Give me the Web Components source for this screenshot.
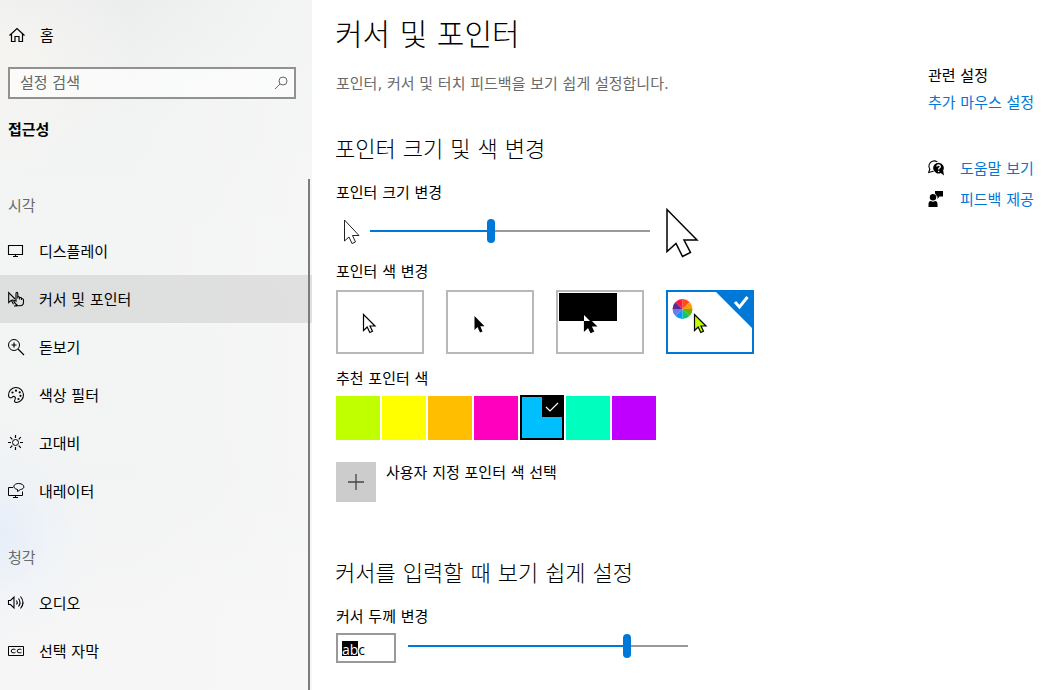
<!DOCTYPE html>
<html lang="ko">
<head>
<meta charset="utf-8">
<meta name="viewport" content="width=device-width, initial-scale=1">
<title>설정</title>
<style>
  body {
    margin: 0;
    background: #fff;
    color: #000;
    font: 15px/22px "DejaVu Sans", "Noto Sans CJK KR", sans-serif;
  }
</style>
</head>
<body>
<settings-app></settings-app>

<script>
const define = (name, html, setup) => {
  const template = document.createElement('template');
  template.innerHTML = html;
  customElements.define(name, class extends HTMLElement {
    constructor() {
      super();
      this.attachShadow({ mode: 'open' }).append(template.content.cloneNode(true));
    }
    connectedCallback() {
      if (setup && !this.ready) { this.ready = true; setup(this, this.shadowRoot); }
    }
  });
};

const line = body => `<g fill="none" stroke="currentColor">${body}</g>`;
const ICONS = {
  home: line('<path d="M.5 8.500L8 1.500L15.500 8.500M2.500 7V14.500H6V9.500H10V14.500H13.500V7" stroke-width="1.200"/>'),
  search: line('<circle cx="11" cy="6" r="4"/><path d="M8 9L3 14"/>'),
  display: line('<path d="M.5 2.500H14.500V11.500H.5ZM7.500 11.500V14M5 13.500H10" stroke-width="1.100"/>'),
  pointer: line('<path d="M7 8L.7 1.700V11.500L3.300 9.300L5.500 13.300M4 9L7 9.500M6 15Q9 15 9.500 14.500M9.500 14.500Q7 12.500 5.800 10.200Q6.800 8.800 8 10L8 2.500Q8 1.200 8.900 1.200Q9.800 1.200 9.800 2.500V7.500M9.800 6Q11.300 5.300 11.600 6.500V8.500M11.600 6.800Q13.300 6 13.600 7.300V9M13.600 7.800Q15.500 7.300 15.500 9.300V11Q15.500 14.800 12 14.800H10Q8 14 6 11" stroke-width="1.100"/>'),
  magnifier: line('<circle cx="6" cy="6" r="5.500"/><path d="M10 10L16 16M3.500 6H8.500M6 3.500V8.500" stroke-width="1.200"/>'),
  palette: line('<path d="M.5 8.500A7.500 7.500 0 1 1 8.500 15.500C6.500 15.500 6 14 7 12.500C8.500 10 5.500 8.500 4.500 10C3.500 11.500 .5 11 .5 8.500Z" stroke-width="1.100"/>') + '<g fill="currentColor"><circle cx="4.500" cy="5.500" r="1.100"/><circle cx="8" cy="3.700" r="1.100"/><circle cx="11.700" cy="5.300" r="1.100"/><circle cx="12.500" cy="8.800" r="1.100"/><circle cx="10.500" cy="12" r="1.100"/></g>',
  sun: line('<circle cx="7.500" cy="7.500" r="3"/><path d="M7.500 0V3M7.500 12V15M0 7.500H3M12 7.500H15M2.200 2.200L4.300 4.300M10.700 10.700L12.800 12.800M2.200 12.800L4.300 10.700M10.700 4.300L12.800 2.200" stroke-width="1.200"/>'),
  narrator: line('<path d="M5 4.500H.5V12.500H14.500V8.500M7.500 12.500V15M5 14.500H10"/><path d="M9.500 8.500V6.500C3.500 5 5.500 .5 10.500 .5C17 .5 17.500 6 12.500 6.500Z"/>'),
  audio: line('<path d="M.5 5.500H2.500L6 2V13L2.500 9.500H.5ZM8.500 5.500Q10 7.500 8.500 9.500M10.500 3.500Q13.500 7.500 10.500 11.500M12.500 1.500Q17.500 7.500 12.500 13.500" stroke-width="1.100"/>'),
  captions: line('<path d="M.5 3.500H15.500V12.500H.5Z"/><path d="M7.500 6.700Q6.500 6 5 6.200Q3.200 6.500 3.200 8Q3.200 9.600 5 9.800Q6.500 10 7.500 9.300M13.500 6.700Q12.500 6 11 6.200Q9.200 6.500 9.200 8Q9.200 9.600 11 9.800Q12.500 10 13.500 9.300"/>'),
  help: '<path d="M.7 12.500L1.800 9A5.200 5.200 0 1 1 5 11.200Z" fill="#fff" stroke="currentColor" stroke-width="1.100"/><circle cx="10.500" cy="8" r="6.200" fill="#fff"/><path fill="currentColor" d="M10.500 2.700A5.400 5.400 0 1 0 12.800 13L16 15.500L15.200 10.800A5.400 5.400 0 0 0 10.500 2.700Z"/><path d="M8.800 6.500Q9 5 10.500 5Q12.300 5 12.300 6.500Q12.300 7.400 11.300 8Q10.600 8.500 10.600 9.500M10.600 10.800V12" fill="none" stroke="#fff" stroke-width="1.300"/>',
  feedback: '<path fill="currentColor" d="M7 0H15V5.500H11.500L9.500 8V5.500H8.600Q8.600 3.500 7 2.500Z"/><circle cx="5" cy="6.200" r="3.200" fill="currentColor"/><path fill="currentColor" d="M.5 16V13Q.5 10 3 10Q5 11.500 7 10Q9.500 10 9.500 13V16Z"/>'
};

const fragment = html => Object.assign(document.createElement('template'), { innerHTML: html }).content;

define('line-icon', `
  <style>
    :host { display: block; width: 16px; height: 16px; flex: none; }
    svg { display: block; width: 100%; height: 100%; overflow: visible; }
  </style>
  <svg viewBox="0 0 16 16" aria-hidden="true"></svg>`,
  (host, root) => { root.querySelector('svg').innerHTML = ICONS[host.getAttribute('name')]; });

define('nav-item', `
  <style>
    :host { display: block; }
    a { display: flex; align-items: center; gap: 15px; height: 48px; padding: 0 8px; color: inherit; text-decoration: none; }
    span { padding-top: 2px; }
    :host([icon="home"]) a { padding-left: 9px; }
    :host([current]) a { background: rgba(0, 0, 0, .085); }
    a:hover { background: rgba(0, 0, 0, .05); }
  </style>
  <a href="#"><span><slot></slot></span></a>`,
  (host, root) => {
    const link = root.querySelector('a');
    link.prepend(fragment(`<line-icon name="${host.getAttribute('icon')}"></line-icon>`));
    if (host.hasAttribute('current')) link.setAttribute('aria-current', 'page');
  });

define('nav-group', `
  <style>
    :host { display: block; padding-top: 32px; }
    h3 { margin: 0 8px 10px; font: inherit; color: #6a6a6a; }
  </style>
  <h3></h3><slot></slot>`,
  (host, root) => { root.querySelector('h3').textContent = host.getAttribute('label'); });

define('search-box', `
  <style>
    :host { display: flex; align-items: center; box-sizing: border-box; height: 32px; margin: 0 16px 0 8px; padding: 0 6px 0 10px;
      border: 2px solid #919191; background: rgba(255, 255, 255, .6); color: #666; }
    input { flex: 1; min-width: 0; border: 0; padding: 0; outline: 0; background: none; font: inherit; color: #000; }
    input::placeholder { color: #666; opacity: 1; }
  </style>
  <input type="search" placeholder="설정 검색" aria-label="설정 검색"><line-icon name="search"></line-icon>`);

define('side-bar', `
  <style>
    :host { display: block; flex: none; width: 312px; box-sizing: border-box; padding-top: 11px;
      background:
        radial-gradient(ellipse 100px 110px at 0 535px, rgba(224, 236, 252, .7), rgba(232, 240, 251, .35) 50%, rgba(244, 245, 246, 0)),
        radial-gradient(ellipse 140px 120px at 0 60px, rgba(248, 246, 241, .7), rgba(244, 244, 242, 0)),
        linear-gradient(90deg, rgba(248, 248, 248, 0) 40%, rgba(248, 248, 248, .6)),
        linear-gradient(180deg, #eceeee 0, #f1f2f2 100px, #f3f4f4 240px, #f2f3f3 480px, #f6f6f6 620px); }
    h2 { margin: 20px 8px 22px; font-size: 15px; line-height: 22px; font-weight: 700; }
    search-box { margin-top: 8px; }
    .scroll { position: relative; padding-bottom: 15px; }
    .scroll::after { content: ""; position: absolute; right: 2px; top: 16px; bottom: 0; width: 2px; background: #7c7c7c; }
  </style>
  <nav-item icon="home">홈</nav-item>
  <search-box></search-box>
  <h2>접근성</h2>
  <nav class="scroll">
    <nav-group label="시각">
      <nav-item icon="display">디스플레이</nav-item>
      <nav-item icon="pointer" current>커서 및 포인터</nav-item>
      <nav-item icon="magnifier">돋보기</nav-item>
      <nav-item icon="palette">색상 필터</nav-item>
      <nav-item icon="sun">고대비</nav-item>
      <nav-item icon="narrator">내레이터</nav-item>
    </nav-group>
    <nav-group label="청각">
      <nav-item icon="audio">오디오</nav-item>
      <nav-item icon="captions">선택 자막</nav-item>
    </nav-group>
  </nav>`);

define('range-slider', `
  <style>
    :host { display: block; flex: 0 1 280px; }
    input { -webkit-appearance: none; appearance: none; display: block; width: 100%; height: 26px; margin: 0; background: none; }
    input::-webkit-slider-runnable-track { height: 2px;
      background: linear-gradient(90deg, #0078d7 var(--fill), #999 var(--fill)); }
    input::-webkit-slider-thumb { -webkit-appearance: none; width: 8px; height: 24px; margin-top: -11px; border-radius: 4px; background: #0078d7; }
  </style>
  <input type="range" min="0" max="100">`,
  (host, root) => {
    const input = root.querySelector('input');
    const paint = () => input.style.setProperty('--fill', input.value + '%');
    input.value = host.getAttribute('value');
    input.setAttribute('aria-label', host.getAttribute('label'));
    input.addEventListener('input', paint);
    paint();
  });

const cursor = (x, y, fill) =>
  `<path transform="translate(${x} ${y})" d="M.5 .5V16.500L4.200 13L6.800 18.500L9.500 17.200L7 12H12Z" fill="${fill}" stroke="#000" stroke-width="1.200"/>`;
const wheel = ['#ff4f0f', '#ff9c0a', '#62b800', '#0ac775', '#0c98fa', '#6b7bea', '#5b2e91', '#ff1744'].map((c, i) => {
  const p = a => `${(14.5 + 10 * Math.sin(a)).toFixed(2)} ${(17 - 10 * Math.cos(a)).toFixed(2)}`;
  return `<path d="M14.500 17L${p(i * Math.PI / 4)}A10 10 0 0 1 ${p((i + 1) * Math.PI / 4)}Z" fill="${c}"/>`;
}).join('');

define('pointer-choices', `
  <style>
    :host { display: flex; flex-wrap: wrap; gap: 22px; }
    label { position: relative; box-sizing: border-box; width: 88px; height: 64px; border: 2px solid #b9b9b9; }
    label:has(:checked) { border-color: #0078d7; }
    input { position: absolute; inset: 0; margin: 0; opacity: 0; }
    svg { display: block; }
    .tick { visibility: hidden; }
    :checked ~ svg .tick { visibility: visible; }
  </style>`,
  (host, root) => {
    const options = [
      ['흰색', cursor(25, 22, '#fff')],
      ['검은색', `<path d="M26.500 24V38L29.500 35L32 40.500L34.500 39.500L32.300 34.200H36.500Z"/>`],
      ['반전', `<path d="M1 1H59V29H1Z"/>${cursor(26, 22, '#000')}<path d="M26 23L32 29H26Z" fill="#fff"/>`],
      ['사용자 지정', `${wheel}${cursor(26, 22, '#bfff00')}`]
    ];
    options.forEach(([name, art], i) => root.append(fragment(`
      <label><input type="radio" name="pointer" aria-label="${name}"${i === 3 ? ' checked' : ''}>
      <svg width="84" height="60" viewBox="0 0 84 60" aria-hidden="true">${art}
      <g class="tick"><path d="M48 0H84V36Z" fill="#0078d7"/><path d="M67 10L71.500 15L79.500 5" fill="none" stroke="#fff" stroke-width="3"/></g></svg></label>`)));
  });

define('color-swatches', `
  <style>
    :host { display: flex; flex-wrap: wrap; gap: 2px; }
    label { position: relative; width: 44px; height: 44px; background: var(--c); }
    label:has(:checked) { box-shadow: 0 -1px #000; }
    input { position: absolute; inset: 0; margin: 0; opacity: 0; }
    svg { display: none; width: 44px; height: 44px; }
    :checked + svg { display: block; }
  </style>`,
  (host, root) => {
    ['#bfff00', '#ffff00', '#ffbf00', '#ff00bf', '#00bfff', '#00ffbf', '#bf00ff'].forEach((c, i) =>
      root.append(fragment(`
      <label style="--c:${c}"><input type="radio" name="color" aria-label="${c}"${i === 4 ? ' checked' : ''}>
      <svg viewBox="0 0 44 44" aria-hidden="true"><path d="M0 0H44V44H0ZM2 1V42H42V1Z" fill-rule="evenodd"/><path d="M22 0H44V21H22Z"/><path d="M26 11L30 15L38 7" fill="none" stroke="#fff" stroke-width="1.200"/></svg></label>`)));
  });

define('related-links', `
  <style>
    :host { display: block; flex: none; width: 133px; padding-top: 65px; white-space: nowrap; }
    p { margin: 0 0 5px; }
    a { color: #0078d7; text-decoration: none; }
    ul { list-style: none; margin: 44px 0 0; padding: 0; display: grid; gap: 9px; }
    li { display: flex; align-items: flex-start; gap: 16px; }
    line-icon { padding-top: 2px; }
  </style>
  <p>관련 설정</p>
  <a href="#">추가 마우스 설정</a>
  <ul>
    <li><line-icon name="help"></line-icon><a href="#">도움말 보기</a></li>
    <li><line-icon name="feedback"></line-icon><a href="#">피드백 제공</a></li>
  </ul>`);

define('pointer-page', `
  <style>
    :host { display: block; flex: 1; min-width: 0; padding: 14px 0 24px 24px; }
    h1 { margin: 0 0 19px; font-size: 30px; line-height: 42px; font-weight: 300; }
    h2 { margin: 0 0 17px; font-size: 22px; line-height: 30px; font-weight: 300; }
    h1, h2 { margin-left: -1px; }
    h3 { margin: 0; font: inherit; }
    p { margin: -2px 0 40px; color: #6a6a6a; }
    .size { display: flex; align-items: center; height: 50px; margin: 2px 0 5px; }
    .size svg { flex: none; overflow: visible; }
    .small { margin: 0 10px 0 7px; }
    .large { margin-left: 16px; }
    pointer-choices { margin: 7px 0 14px; }
    color-swatches { margin: 6px 0 22px; }
    .custom { display: flex; gap: 10px; margin-bottom: 57px; }
    button { display: grid; place-items: center; width: 40px; height: 40px; padding: 0; border: 0; background: #ccc; }
    .thick { display: flex; align-items: flex-start; gap: 12px; margin-top: 5px; }
    .preview { box-sizing: border-box; flex: none; width: 60px; height: 30px; padding: 6px 4px; border: 2px solid #999;
      font: 14px/17px "Open Sans", sans-serif; }
    .preview mark { display: inline-block; height: 15px; background: #000; color: #fff; }
  </style>
  <h1>커서 및 포인터</h1>
  <p>포인터, 커서 및 터치 피드백을 보기 쉽게 설정합니다.</p>
  <h2>포인터 크기 및 색 변경</h2>
  <h3>포인터 크기 변경</h3>
  <div class="size">
    <svg class="small" width="17" height="25" viewBox="0 0 17 25" aria-hidden="true"><path d="M1.500 1V22L6 18L9 24.500L12.500 23L9.500 16.500H16Z" fill="#fff" stroke="#222"/></svg>
    <range-slider value="43" label="포인터 크기 변경"></range-slider>
    <svg class="large" width="32" height="50" viewBox="0 0 32 50" aria-hidden="true"><path d="M1 3.500V45.500L10 37.500L16.500 50.500L24.500 46.500L18 34H31Z" fill="#fff" stroke="#000" stroke-width="1.500"/></svg>
  </div>
  <h3>포인터 색 변경</h3>
  <pointer-choices role="radiogroup" aria-label="포인터 색 변경"></pointer-choices>
  <h3>추천 포인터 색</h3>
  <color-swatches role="radiogroup" aria-label="추천 포인터 색"></color-swatches>
  <div class="custom">
    <button id="add" type="button" aria-labelledby="add-label"><svg width="16" height="16" aria-hidden="true"><path d="M8 0V16M0 8H16" fill="none" stroke="#444" stroke-width="1.300"/></svg></button>
    <label id="add-label" for="add">사용자 지정 포인터 색 선택</label>
  </div>
  <h2>커서를 입력할 때 보기 쉽게 설정</h2>
  <h3>커서 두께 변경</h3>
  <div class="thick">
    <div class="preview"><mark>ab</mark>c</div>
    <range-slider value="79" label="커서 두께 변경"></range-slider>
  </div>`);

define('settings-app', `
  <style>:host { display: flex; min-height: 100vh; }</style>
  <side-bar></side-bar>
  <pointer-page></pointer-page>
  <related-links></related-links>`);
</script>
</body>
</html>
